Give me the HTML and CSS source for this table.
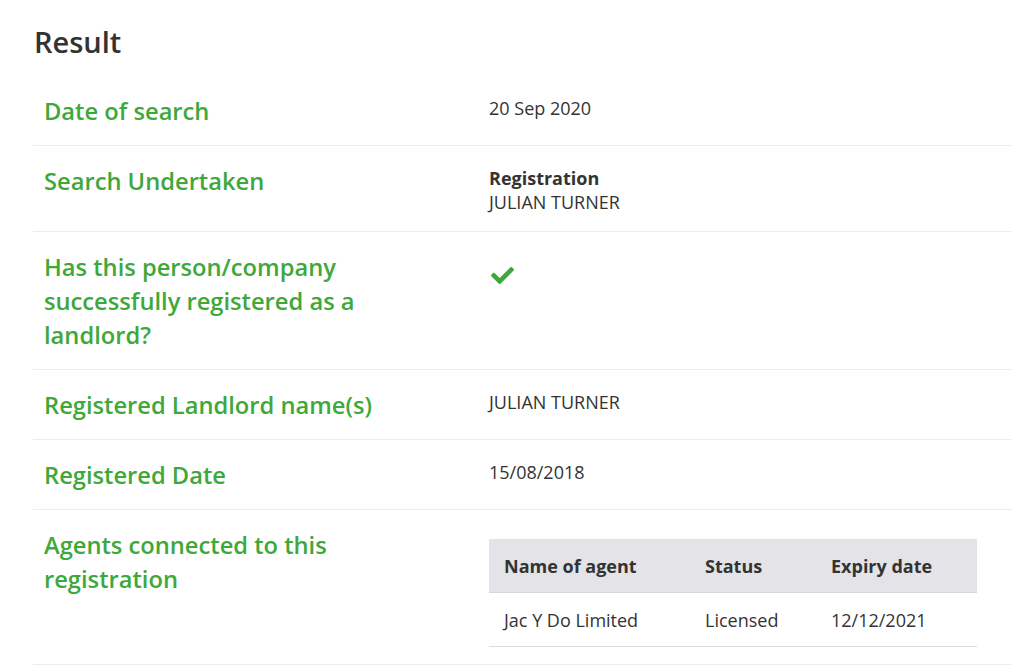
FILE: index.html
```html
<!DOCTYPE html>
<html lang="en">
<head>
<meta charset="utf-8">
<title>Result</title>
<link rel="stylesheet" href="styles.css">
</head>
<body>
<main class="page">
  <h1 class="title">Result</h1>
  <div class="results">
    <div class="row">
      <div class="label">Date of search</div>
      <div class="value">20 Sep 2020</div>
    </div>
    <div class="row">
      <div class="label">Search Undertaken</div>
      <div class="value"><strong>Registration</strong><br>JULIAN TURNER</div>
    </div>
    <div class="row">
      <div class="label">Has this person/company successfully registered as a landlord?</div>
      <div class="value">
        <svg class="check" viewBox="0 66 512 380" width="23" height="17" aria-label="Yes"><path fill="currentColor" d="M173.898 439.404l-166.4-166.4c-9.997-9.997-9.997-26.206 0-36.204l36.203-36.204c9.997-9.998 26.207-9.998 36.204 0L192 312.69 432.095 72.596c9.997-9.997 26.207-9.997 36.204 0l36.203 36.204c9.997 9.997 9.997 26.206 0 36.204l-294.4 294.401c-9.998 9.997-26.207 9.997-36.204-.001z"/></svg>
      </div>
    </div>
    <div class="row">
      <div class="label">Registered Landlord name(s)</div>
      <div class="value">JULIAN TURNER</div>
    </div>
    <div class="row">
      <div class="label">Registered Date</div>
      <div class="value">15/08/2018</div>
    </div>
    <div class="row">
      <div class="label">Agents connected to this registration</div>
      <div class="value">
        <table class="agents">
          <thead>
            <tr><th class="c1">Name of agent</th><th class="c2">Status</th><th class="c3">Expiry date</th></tr>
          </thead>
          <tbody>
            <tr><td>Jac Y Do Limited</td><td>Licensed</td><td>12/12/2021</td></tr>
          </tbody>
        </table>
      </div>
    </div>
  </div>
</main>
</body>
</html>
```
FILE: styles.css
```css
html, body {
  margin: 0;
  padding: 0;
  background: #fff;
}
body {
  font-family: "Open Sans", "Liberation Sans", sans-serif;
  color: #333;
}
.page {
  padding: 22px 12px 0 33px;
}
.title {
  margin: 0 0 0 1px;
  font-size: 29px;
  font-weight: 600;
  line-height: 40px;
  color: #333;
}
.results {
  margin-top: 14px;
}
.row {
  display: grid;
  grid-template-columns: 456px 1fr;
  border-bottom: 1px solid #ececec;
  padding: 18px 0 17px;
}
.label {
  padding: 0 100px 0 11px;
  font-size: 23.7px;
  font-weight: 600;
  line-height: 34px;
  color: #3ea83a;
}
.value {
  font-size: 18px;
  line-height: 24px;
  color: #333;
  padding: 2px 36px 0 0;
}
.value strong {
  font-weight: 700;
}
.check {
  display: block;
  margin: 15px 0 0 2px;
  color: #3ea83a;
}
.agents {
  margin-top: 9px;
  width: 488px;
  border-collapse: collapse;
  font-size: 18px;
}
.agents th {
  background: #e3e3e8;
  font-weight: 700;
  text-align: left;
  height: 53px;
  padding: 0 0 0 15px;
  border-bottom: 1px solid #d6d6db;
}
.agents td {
  height: 53px;
  padding: 0 0 0 15px;
  border-bottom: 1px solid #dcdcdc;
}
.agents .c1 { width: 186px; }
.agents .c2 { width: 111px; }
```
